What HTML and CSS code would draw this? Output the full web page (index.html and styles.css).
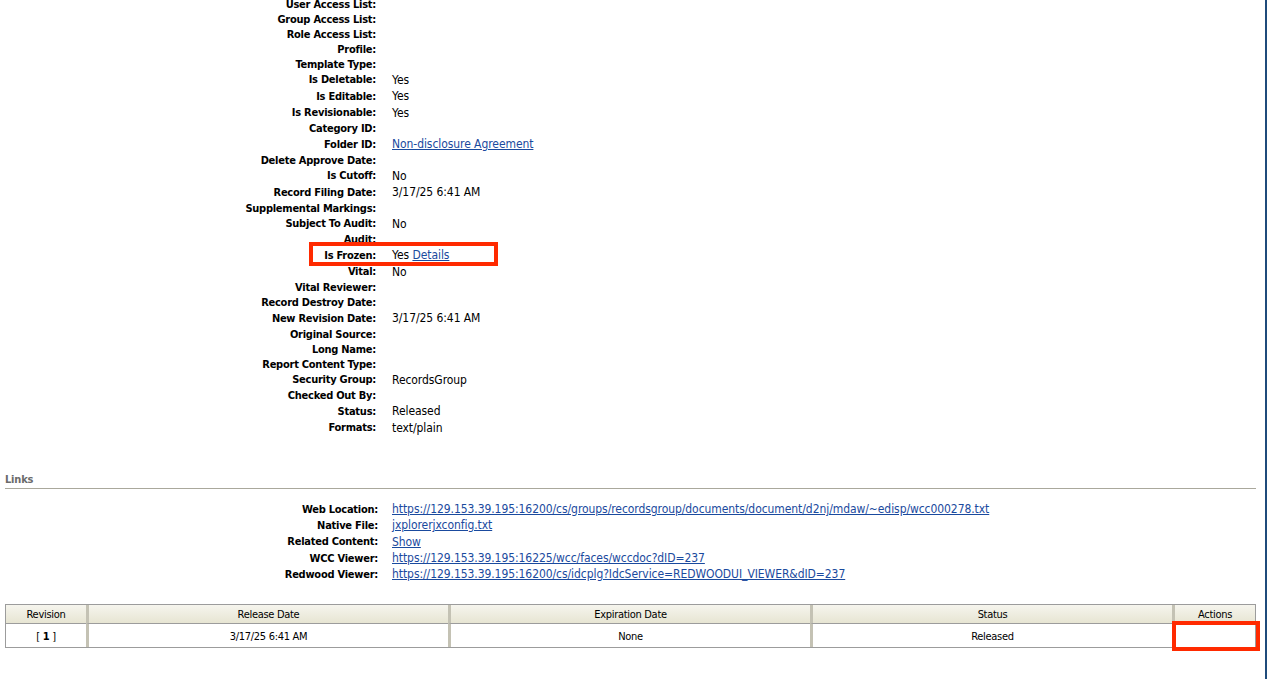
FILE: index.html
```html
<!DOCTYPE html>
<html>
<head>
<meta charset="utf-8">
<title>Content Information</title>
<link rel="stylesheet" href="styles.css">
</head>
<body>
<div class="page">
  <div class="meta">
    <div class="row"><span class="lbl">User Access List:</span><span class="val"></span></div>
    <div class="row"><span class="lbl">Group Access List:</span><span class="val"></span></div>
    <div class="row"><span class="lbl">Role Access List:</span><span class="val"></span></div>
    <div class="row"><span class="lbl">Profile:</span><span class="val"></span></div>
    <div class="row"><span class="lbl">Template Type:</span><span class="val"></span></div>
    <div class="row"><span class="lbl">Is Deletable:</span><span class="val">Yes</span></div>
    <div class="row"><span class="lbl">Is Editable:</span><span class="val">Yes</span></div>
    <div class="row"><span class="lbl">Is Revisionable:</span><span class="val">Yes</span></div>
    <div class="row"><span class="lbl">Category ID:</span><span class="val"></span></div>
    <div class="row"><span class="lbl">Folder ID:</span><span class="val"><a href="#">Non-disclosure Agreement</a></span></div>
    <div class="row"><span class="lbl">Delete Approve Date:</span><span class="val"></span></div>
    <div class="row"><span class="lbl">Is Cutoff:</span><span class="val">No</span></div>
    <div class="row"><span class="lbl">Record Filing Date:</span><span class="val">3/17/25 6:41 AM</span></div>
    <div class="row"><span class="lbl">Supplemental Markings:</span><span class="val"></span></div>
    <div class="row"><span class="lbl">Subject To Audit:</span><span class="val">No</span></div>
    <div class="row"><span class="lbl">Audit:</span><span class="val"></span></div>
    <div class="row"><span class="lbl">Is Frozen:</span><span class="val">Yes <a href="#">Details</a></span></div>
    <div class="row"><span class="lbl">Vital:</span><span class="val">No</span></div>
    <div class="row"><span class="lbl">Vital Reviewer:</span><span class="val"></span></div>
    <div class="row"><span class="lbl">Record Destroy Date:</span><span class="val"></span></div>
    <div class="row"><span class="lbl">New Revision Date:</span><span class="val">3/17/25 6:41 AM</span></div>
    <div class="row"><span class="lbl">Original Source:</span><span class="val"></span></div>
    <div class="row"><span class="lbl">Long Name:</span><span class="val"></span></div>
    <div class="row"><span class="lbl">Report Content Type:</span><span class="val"></span></div>
    <div class="row"><span class="lbl">Security Group:</span><span class="val">RecordsGroup</span></div>
    <div class="row"><span class="lbl">Checked Out By:</span><span class="val"></span></div>
    <div class="row"><span class="lbl">Status:</span><span class="val">Released</span></div>
    <div class="row"><span class="lbl">Formats:</span><span class="val">text/plain</span></div>
  </div>

  <div class="section-head">Links</div>

  <div class="meta links">
    <div class="row"><span class="lbl">Web Location:</span><span class="val"><a href="#">https://129.153.39.195:16200/cs/groups/recordsgroup/documents/document/d2nj/mdaw/~edisp/wcc000278.txt</a></span></div>
    <div class="row"><span class="lbl">Native File:</span><span class="val"><a href="#">jxplorerjxconfig.txt</a></span></div>
    <div class="row"><span class="lbl">Related Content:</span><span class="val"><a href="#">Show</a></span></div>
    <div class="row"><span class="lbl">WCC Viewer:</span><span class="val"><a href="#">https://129.153.39.195:16225/wcc/faces/wccdoc?dID=237</a></span></div>
    <div class="row"><span class="lbl">Redwood Viewer:</span><span class="val"><a href="#">https://129.153.39.195:16200/cs/idcplg?IdcService=REDWOODUI_VIEWER&amp;dID=237</a></span></div>
  </div>

  <table class="revs">
    <thead>
      <tr>
        <th class="c-rev">Revision</th>
        <th class="c-wide">Release Date</th>
        <th class="c-wide">Expiration Date</th>
        <th class="c-wide">Status</th>
        <th class="c-act">Actions</th>
      </tr>
    </thead>
    <tbody>
      <tr>
        <td class="c-rev">[ <b>1</b> ]</td>
        <td class="c-wide">3/17/25 6:41 AM</td>
        <td class="c-wide">None</td>
        <td class="c-wide">Released</td>
        <td class="c-act"></td>
      </tr>
    </tbody>
  </table>

  <div class="mark mark-frozen"></div>
  <div class="mark mark-actions"></div>
</div>
</body>
</html>
```

FILE: styles.css
```css
html, body {
  margin: 0;
  padding: 0;
  background: #ffffff;
}

body {
  font-family: "DejaVu Sans Condensed", "DejaVu Sans", Tahoma, sans-serif;
  color: #000;
  overflow: hidden;
}

.page {
  display: flow-root;
  position: relative;
  width: 1267px;
  height: 679px;
  box-sizing: border-box;
  padding: 0 0 0 5px;
  border-right: 2px solid #1f4b7b;
}

.meta {
  display: flex;
  flex-direction: column;
  margin-top: -3.5px;
}

.row {
  display: grid;
  grid-template-columns: 371px 1fr;
  column-gap: 16px;
  min-height: 15px;
  align-items: center;
}

.lbl {
  text-align: right;
  font-weight: bold;
  font-size: 11px;
  line-height: 15px;
  letter-spacing: -0.25px;
  white-space: nowrap;
}

.val {
  font-size: 12px;
  line-height: 16.5px;
  letter-spacing: -0.07px;
  white-space: nowrap;
}

a {
  color: #1a4a9e;
  text-decoration: underline;
}

.section-head {
  margin-top: 36px;
  width: 1251px;
  font-size: 11px;
  line-height: 15px;
  font-weight: bold;
  letter-spacing: -0.2px;
  color: #6b6b6b;
  padding-bottom: 1px;
  border-bottom: 1px solid #aaa89c;
}

.links {
  margin-top: 12px;
}

.links .row {
  grid-template-columns: 373px 1fr;
  column-gap: 14px;
  min-height: 0;
  height: 16.25px;
}

.revs {
  margin-top: 22px;
  width: 1251px;
  table-layout: fixed;
  border-collapse: separate;
  border-spacing: 0;
  border: 1px solid #9c9c9c;
  font-size: 11px;
  letter-spacing: -0.3px;
}

.revs th,
.revs td {
  box-sizing: border-box;
  padding: 0;
  text-align: center;
  font-weight: normal;
  border-left: 3px solid #c4c2b4;
}

.revs th:first-child,
.revs td:first-child {
  border-left: none;
}

.revs th {
  height: 19px;
  background: linear-gradient(#f6f5ee, #e7e5d3);
  border-bottom: 1px solid #9c9c9c;
}

.revs td {
  height: 23px;
  padding-top: 1px;
  background: #fff;
}

.revs td b {
  font-weight: bold;
}

.c-rev { width: 80px; }
.c-wide { width: 362px; }
.c-act { width: 83px; }

.mark {
  position: absolute;
  border: 4px solid #ff2a00;
  box-sizing: border-box;
}

.mark-frozen {
  left: 309px;
  top: 242px;
  width: 189px;
  height: 24px;
}

.mark-actions {
  left: 1172px;
  top: 621px;
  width: 88px;
  height: 30px;
}
```
